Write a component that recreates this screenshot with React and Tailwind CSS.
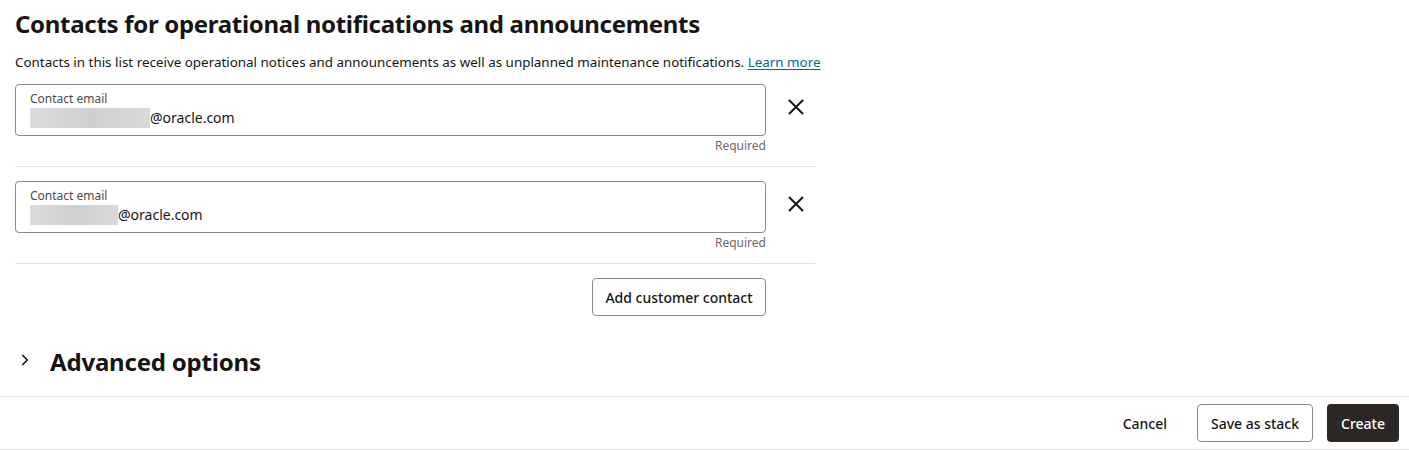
import { X, ChevronRight } from "lucide-react";

const contacts = [
  { id: 1, redactWidth: 120 },
  { id: 2, redactWidth: 88 },
];

function ContactRow({ redactWidth }) {
  return (
    <div className="border-b border-[#e4e4e4] pt-[14px] pb-[12px] first:pt-0">
      <div className="flex items-start">
        <div className="w-[751px]">
          <div className="h-[52px] rounded-[4px] border border-[#8a8a8a] px-[14px] pt-[6px]">
            <div className="text-[12px] leading-[16px] text-[#4f4a45]">Contact email</div>
            <div className="flex items-center text-[14px] leading-[22px] text-[#161513]">
              <span
                className="inline-block h-[20px] bg-gradient-to-r from-[#dcdcdc] via-[#cfcfcf] to-[#d9d9d9]"
                style={{ width: redactWidth }}
              />
              <span>@oracle.com</span>
            </div>
          </div>
          <div className="pt-[2px] text-right text-[12px] leading-[16px] text-[#6f6a65]">Required</div>
        </div>
        <button className="ml-[17px] mt-[10px] flex h-[26px] w-[26px] items-center justify-center text-[#161513]">
          <X size={26} strokeWidth={1.8} />
        </button>
      </div>
    </div>
  );
}

export default function App() {
  return (
    <div className="w-[1409px] h-[451px] bg-white font-['Noto_Sans',sans-serif] text-[#161513]">
      <div className="px-[15px]">
        <h1 className="pt-[6px] text-[24px] font-bold leading-[36px] tracking-[-0.3px]">
          Contacts for operational notifications and announcements
        </h1>
        <p className="mt-[10px] text-[13.4px] leading-[20px]">
          Contacts in this list receive operational notices and announcements as well as unplanned maintenance
          notifications.{" "}
          <a href="#" className="text-[#00688c] underline underline-offset-2">
            Learn more
          </a>
        </p>

        <div className="mt-[12px] w-[800px]">
          {contacts.map((c) => (
            <ContactRow key={c.id} redactWidth={c.redactWidth} />
          ))}
          <div className="flex pt-[14px] pl-[577px]">
            <button className="h-[38px] w-[174px] rounded-[4px] border border-[#8a8a8a] text-[14px] font-medium">
              Add customer contact
            </button>
          </div>
        </div>

        <div className="mt-[28px] flex items-center">
          <ChevronRight size={18} strokeWidth={2.2} className="ml-[1px] mb-[5px]" />
          <h2 className="ml-[16px] text-[24px] font-bold leading-[36px] tracking-[-0.2px]">Advanced options</h2>
        </div>
      </div>

      <div className="mt-[16px] flex items-center justify-end gap-[14px] border-y border-[#e4e4e4] px-[10px] py-[7px]">
        <button className="h-[38px] px-[16px] text-[14px] font-medium">Cancel</button>
        <button className="h-[38px] w-[116px] rounded-[4px] border border-[#8a8a8a] text-[14px] font-medium">
          Save as stack
        </button>
        <button className="h-[38px] w-[72px] rounded-[4px] bg-[#2b2724] text-[14px] font-medium text-white">
          Create
        </button>
      </div>
    </div>
  );
}
